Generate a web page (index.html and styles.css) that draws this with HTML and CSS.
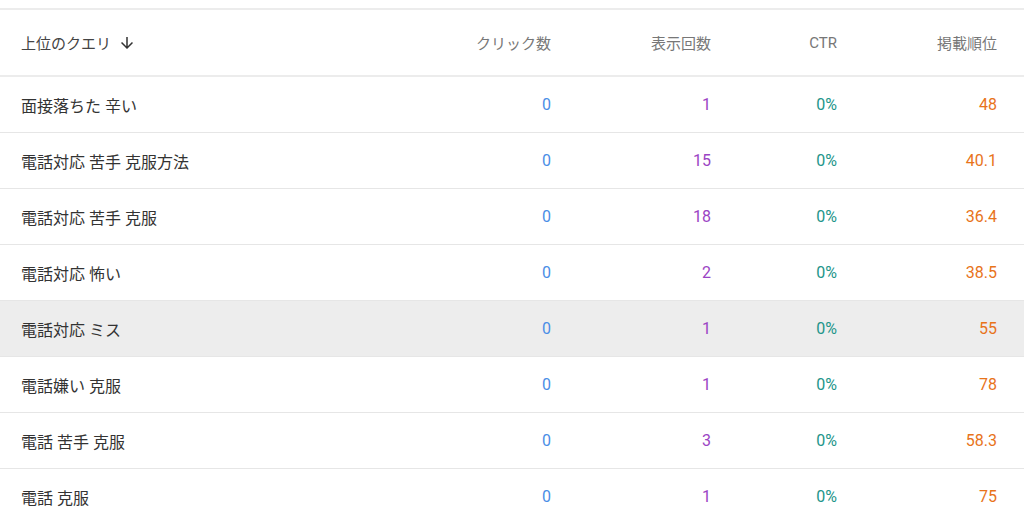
FILE: index.html
```html
<!DOCTYPE html>
<html lang="ja">
<head>
<meta charset="utf-8">
<title>上位のクエリ</title>
<link rel="stylesheet" href="styles.css">
</head>
<body>
<div class="table">
  <div class="row head">
    <div class="cell query">上位のクエリ
      <svg class="sort" viewBox="0 0 24 24" width="18" height="18"><path d="M20 12l-1.41-1.41L13 16.17V4h-2v12.17l-5.58-5.59L4 12l8 8 8-8z"/></svg>
    </div>
    <div class="cell num">クリック数</div>
    <div class="cell num">表示回数</div>
    <div class="cell num">CTR</div>
    <div class="cell num">掲載順位</div>
  </div>
  <div class="row"><div class="cell query">面接落ちた 辛い</div><div class="cell num c">0</div><div class="cell num i">1</div><div class="cell num t">0%</div><div class="cell num p">48</div></div>
  <div class="row"><div class="cell query">電話対応 苦手 克服方法</div><div class="cell num c">0</div><div class="cell num i">15</div><div class="cell num t">0%</div><div class="cell num p">40.1</div></div>
  <div class="row"><div class="cell query">電話対応 苦手 克服</div><div class="cell num c">0</div><div class="cell num i">18</div><div class="cell num t">0%</div><div class="cell num p">36.4</div></div>
  <div class="row"><div class="cell query">電話対応 怖い</div><div class="cell num c">0</div><div class="cell num i">2</div><div class="cell num t">0%</div><div class="cell num p">38.5</div></div>
  <div class="row hover"><div class="cell query">電話対応 ミス</div><div class="cell num c">0</div><div class="cell num i">1</div><div class="cell num t">0%</div><div class="cell num p">55</div></div>
  <div class="row"><div class="cell query">電話嫌い 克服</div><div class="cell num c">0</div><div class="cell num i">1</div><div class="cell num t">0%</div><div class="cell num p">78</div></div>
  <div class="row"><div class="cell query">電話 苦手 克服</div><div class="cell num c">0</div><div class="cell num i">3</div><div class="cell num t">0%</div><div class="cell num p">58.3</div></div>
  <div class="row"><div class="cell query">電話 克服</div><div class="cell num c">0</div><div class="cell num i">1</div><div class="cell num t">0%</div><div class="cell num p">75</div></div>
</div>
</body>
</html>
```
FILE: styles.css
```css
html, body {
  margin: 0;
  padding: 0;
  background: #fff;
  overflow: hidden;
}
body {
  font-family: Roboto, "Noto Sans CJK JP", sans-serif;
  color: #333;
}
.table {
  margin-top: 8px;
  border-top: 2px solid #ececec;
}
.row {
  display: grid;
  grid-template-columns: 1fr 160px 160px 126px 160px;
  align-items: center;
  height: 55px;
  padding: 0 27px 0 21px;
  border-bottom: 1px solid #e6e6e6;
  font-size: 16px;
}
.row.head {
  height: 65px;
  font-size: 15px;
  color: #777;
  border-bottom: 2px solid #ececec;
}
.row.hover {
  background: #ededed;
}
.cell.query {
  display: flex;
  align-items: center;
  gap: 7px;
}
.head .cell.query {
  color: #444;
}
.sort {
  fill: #333;
}
.cell.num {
  text-align: right;
}
.c { color: #4a8ee6; }
.i { color: #9b44c4; }
.t { color: #22958a; }
.p { color: #e8731a; }
```
